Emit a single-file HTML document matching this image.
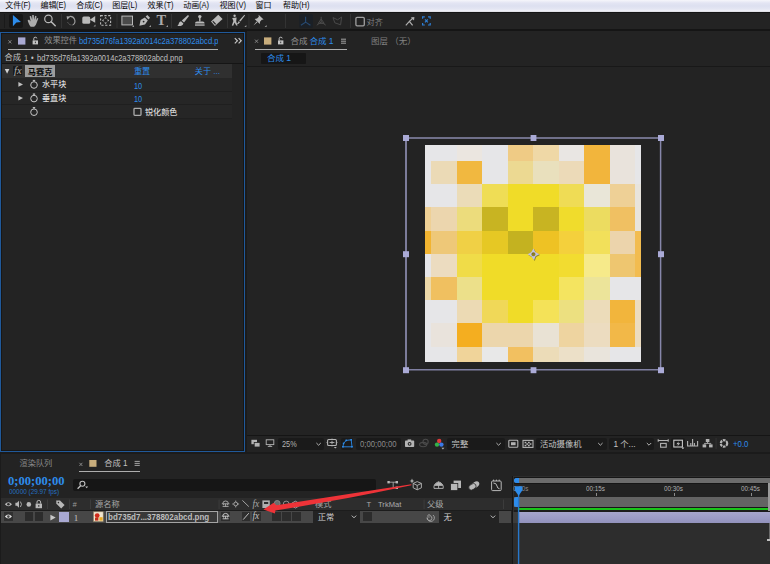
<!DOCTYPE html>
<html lang="zh-CN">
<head>
<meta charset="utf-8">
<title>After Effects</title>
<style>
html,body{margin:0;padding:0;}
body{width:770px;height:564px;overflow:hidden;background:#1b1b1b;position:relative;font-family:"Liberation Sans","Noto Sans CJK SC",sans-serif;font-size:9px;color:#b4b4b4;}
.a{position:absolute;}
.t{position:absolute;white-space:nowrap;font-size:9px;line-height:12px;color:#b8b8b8;}
.b{color:#2d8ceb;}
.l{display:inline-block;transform:scaleX(.885);transform-origin:0 50%;}
.dd{background:#1a1a1a;border-radius:2px;}
.sep{position:absolute;width:1px;background:#3a3a3a;}
svg{position:absolute;overflow:visible;}
</style>
</head>
<body>
<!-- menu bar -->
<div class="a" style="left:0;top:0;width:770px;height:11.6px;background:linear-gradient(#f6f6fb 0%,#e3e5f3 25%,#dde0f0 50%,#e4e6f3 75%,#f0f0f6 92%,#d0d0d6 100%);"></div>
<div class="t" style="left:5.2px;top:0.2px;color:#0a0a0a;font-size:8px;line-height:11px;">文件<span class="l" style="font-size:8.4px;transform:scaleX(.9)">(F)</span></div>
<div class="t" style="left:40.4px;top:0.2px;color:#0a0a0a;font-size:8px;line-height:11px;">编辑<span class="l" style="font-size:8.4px;transform:scaleX(.9)">(E)</span></div>
<div class="t" style="left:76.2px;top:0.2px;color:#0a0a0a;font-size:8px;line-height:11px;">合成<span class="l" style="font-size:8.4px;transform:scaleX(.9)">(C)</span></div>
<div class="t" style="left:112.2px;top:0.2px;color:#0a0a0a;font-size:8px;line-height:11px;">图层<span class="l" style="font-size:8.4px;transform:scaleX(.9)">(L)</span></div>
<div class="t" style="left:147.6px;top:0.2px;color:#0a0a0a;font-size:8px;line-height:11px;">效果<span class="l" style="font-size:8.4px;transform:scaleX(.9)">(T)</span></div>
<div class="t" style="left:183.2px;top:0.2px;color:#0a0a0a;font-size:8px;line-height:11px;">动画<span class="l" style="font-size:8.4px;transform:scaleX(.9)">(A)</span></div>
<div class="t" style="left:219.6px;top:0.2px;color:#0a0a0a;font-size:8px;line-height:11px;">视图<span class="l" style="font-size:8.4px;transform:scaleX(.9)">(V)</span></div>
<div class="t" style="left:255.6px;top:0.2px;color:#0a0a0a;font-size:8px;line-height:11px;">窗口<span class="l" style="font-size:8.4px;transform:scaleX(.9)"></span></div>
<div class="t" style="left:283px;top:0.2px;color:#0a0a0a;font-size:8px;line-height:11px;">帮助<span class="l" style="font-size:8.4px;transform:scaleX(.9)">(H)</span></div>

<!-- tool bar -->
<div class="a" style="left:0;top:12px;width:770px;height:20px;background:#151515;"></div>
<div class="a" id="toolbar" style="left:0;top:12.6px;width:770px;height:16.2px;background:#232323;"></div>
<!-- toolbar icons -->
<div class="a" style="left:3.8px;top:14px;width:1.2px;height:13.6px;background:#1a1a1a;"></div>
<div class="a" style="left:9px;top:13.8px;width:14.2px;height:13.8px;background:#161616;border-radius:2px;"></div>
<svg style="left:0;top:12px" width="770" height="18" viewBox="0 12 770 18">
 <!-- selection arrow -->
 <path d="M12.9 15.1 L21 22 L16.4 22.6 L12.9 26.3 Z" fill="#2d8ceb"/>
 <!-- hand -->
 <g fill="#adadad" transform="translate(33.4 20.6) scale(1.07 1.04) translate(-34.6 -20.6)">
  <path d="M29.2 20.4 l1.3 -0.9 l1.5 2 l-0.9 -5 l1.3 -0.4 l1.1 3.8 l0 -4.6 l1.4 0 l0.4 4.5 l0.9 -3.8 l1.3 0.3 l-0.6 4.2 l1.2 -2.4 l1.1 0.5 l-1.7 4.6 q-0.6 2.6 -2.2 3.2 l-3.2 0 q-1.2 -1 -2.9 -6 z"/>
 </g>
 <!-- magnifier -->
 <circle cx="48.4" cy="18.9" r="3.7" fill="none" stroke="#b9b9b9" stroke-width="1.2"/>
 <path d="M51.2 21.8 L55.2 25.8" stroke="#b9b9b9" stroke-width="1.5" stroke-linecap="round"/>
 <rect x="61" y="14" width="1" height="14" fill="#333"/>
 <!-- rotate -->
 <path d="M69.4 16.5 A4.7 4.7 0 0 1 73 24.9" fill="none" stroke="#a0a0a0" stroke-width="1.1"/><path d="M73 24.9 A4.7 4.7 0 0 1 67.4 21.4" fill="none" stroke="#6c6c6c" stroke-width="1" stroke-dasharray="1.4 1"/>
 <path d="M66.6 16.2 L70.6 16.4 L67.2 19.8 Z" fill="#a8a8a8"/>
 <!-- camera -->
 <rect x="82.3" y="16.4" width="7.9" height="7.4" rx="1.5" fill="#b9b9b9"/>
 <path d="M89.8 19.8 L95.2 16 L95.2 22.8 Z" fill="#b9b9b9"/>
 <path d="M95.5 26.6 l0 -2 l-2 2 z" fill="#9a9a9a"/>
 <!-- pan behind -->
 <g fill="none" stroke="#b9b9b9" stroke-width="1.1">
  <rect x="100.6" y="15.6" width="10" height="9.6" stroke-dasharray="2.2 1.6"/>
 </g>
 <g fill="#b9b9b9">
  <path d="M105.6 17 l1.4 1.6 l-2.8 0 z M105.6 24 l1.4 -1.6 l-2.8 0 z M102 20.4 l1.6 -1.4 l0 2.8 z M109.2 20.4 l-1.6 -1.4 l0 2.8 z"/>
 </g>
 <rect x="116.5" y="14" width="1" height="14" fill="#333"/>
 <!-- rectangle -->
 <rect x="121.9" y="16.1" width="10.6" height="8.8" fill="#4a4a4a" stroke="#b9b9b9" stroke-width="1"/>
 <path d="M134 27 l0 -2 l-2 2 z" fill="#9a9a9a"/>
 <!-- pen -->
 <g fill="#b9b9b9">
  <path d="M139.4 25.8 L140.6 20 L144.8 17.4 L147.8 20.6 L145 24.4 Z"/>
  <path d="M145.6 16.6 L147.4 15 L150 17.8 L148.5 19.6 Z"/>
 </g>
 <circle cx="143.6" cy="21.6" r="0.9" fill="#232323"/>
 <path d="M151 27 l0 -2 l-2 2 z" fill="#9a9a9a"/>
 <!-- T -->
 <text x="156.4" y="25.1" font-family="Liberation Serif,serif" font-weight="bold" font-size="14.4" fill="#ababab">T</text>
 <path d="M168 27 l0 -2 l-2 2 z" fill="#9a9a9a"/>
 <rect x="171" y="14" width="1" height="14" fill="#333"/>
 <!-- brush -->
 <path d="M188 15 L189 16 L184 22.6 L181.8 20.6 Z" fill="#b9b9b9"/>
 <path d="M181 21.2 L183.4 23.4 Q182.4 26.6 177.4 26 Q178.6 24.8 178.8 23.4 Q179.2 21.4 181 21.2 Z" fill="#b9b9b9"/>
 <!-- stamp -->
 <g fill="#b9b9b9">
  <circle cx="199.8" cy="16.6" r="1.7"/>
  <rect x="199.1" y="17.5" width="1.4" height="4"/>
  <path d="M195 23.6 q0 -2.2 2 -2.2 l5.6 0 q2 0 2 2.2 z"/>
  <rect x="195" y="24.4" width="9.6" height="1.3"/>
 </g>
 <!-- eraser -->
 <path d="M218.3 14.7 L222.6 19 L214.9 25.9 L211 21.6 Z" fill="#b9b9b9"/>
 <path d="M212.3 21.5 L213.2 20.7 L216.2 23.9 L215.1 24.8 Z" fill="#2a2a2a"/>
 <rect x="227" y="14" width="1" height="14" fill="#333"/>
 <!-- roto brush -->
 <g fill="#b9b9b9">
  <circle cx="234.6" cy="15.8" r="1.2"/>
  <path d="M232.2 18 L236.6 17.4 L236.2 21.4 L237.6 25.4 L236.2 25.6 L234.6 22.4 L233.2 25.8 L231.8 25.4 L233.4 21 Z"/>
  <path d="M244.4 14.8 L245 15.4 L240.4 21.4 L239.2 20.4 Z"/>
  <path d="M238.8 21 L240 22.2 Q238.6 24.6 236.6 24.2 Q238 23 238.8 21 Z"/>
 </g>
 <path d="M246.4 27 l0 -2 l-2 2 z" fill="#9a9a9a"/>
 <rect x="248.4" y="14" width="1" height="14" fill="#333"/>
 <!-- pin -->
 <g fill="#b9b9b9">
  <path d="M258.6 14.8 L263.6 19.4 L261.8 19.8 L260 21.8 L259.8 24 L254.6 19 L257 18.6 L258.8 16.8 Z"/>
  <path d="M256.6 21.4 L257.4 22.2 L253.4 25.6 Z"/>
 </g>
 <path d="M266.6 27 l0 -2 l-2 2 z" fill="#9a9a9a"/>
 <rect x="285" y="14" width="1" height="14" fill="#333"/>
 <!-- axis modes -->
 <rect x="299.2" y="14.2" width="13.8" height="13.8" rx="1.5" fill="#1b2026"/>
 <g fill="none" stroke="#274a72" stroke-width="1.1">
  <path d="M305.6 16.8 L305.6 22.1 L300.9 25.2 M305.6 22.1 L310.4 25.2"/>
 </g>
 <g fill="none" stroke="#4a4a4a" stroke-width="1">
  <path d="M321.2 16.8 L321.2 22 L316.8 25.2 M321.2 22 L325.8 25.2 M318.2 23.4 L324.2 23.4 L321.2 19 Z"/>
  <path d="M333 17.6 L337.6 19.8 L341.6 17 L340.6 24.8 L334.8 22.8 Z"/>
 </g>
 <rect x="350" y="14" width="1" height="14" fill="#333"/>
 <!-- snap checkbox -->
 <rect x="355.9" y="17.4" width="8.4" height="8.4" rx="1.2" fill="none" stroke="#a0a0a0" stroke-width="1.3"/>
 <text x="366.6" y="24.8" font-size="8.2" fill="#808080" font-family="Liberation Sans,Noto Sans CJK SC,sans-serif">对齐</text>
 <!-- snap icons -->
 <g stroke="#b0b0b0" stroke-width="1.2" fill="none">
  <path d="M405.8 25.4 L409.4 21.4 L412.6 25.4 M409.4 21.4 L413 18"/>
 </g>
 <path d="M410.8 17.4 L414.4 17 L414 20.6 Z" fill="#b0b0b0"/>
 <g stroke="#2d7fd6" stroke-width="1.2" fill="none" transform="translate(-0.4 0.6)">
  <path d="M423 18.2 L423 16.2 L425.2 16.2 M428.4 16.2 L430.6 16.2 L430.6 18.2 M430.6 22.4 L430.6 24.4 L428.4 24.4 M425.2 24.4 L423 24.4 L423 22.4"/>
  <path d="M425.4 18.8 L428.2 21.8 M428.2 18.8 L425.4 21.8"/>
 </g>
</svg>


<!-- left panel : effect controls -->
<div class="a" id="lp" style="left:0;top:31.5px;width:245px;height:420.3px;background:#232323;box-sizing:border-box;border:1.7px solid #20599a;box-shadow:inset 0 0 0 0.8px #141414;"></div>
<!-- effect controls tab -->
<svg style="left:0;top:31px" width="246" height="30" viewBox="0 31 246 30">
 <path d="M8.4 40.2 L11.4 43.4 M11.4 40.2 L8.4 43.4" stroke="#8c8c8c" stroke-width="0.9" fill="none"/>
 <rect x="18" y="37.4" width="7.4" height="7.2" fill="#a9a9d2"/>
 <!-- lock -->
 <rect x="32.6" y="40.4" width="5.4" height="4" fill="#c4c4c4"/>
 <path d="M33.8 40.4 L33.8 38.6 Q33.8 37.2 35.3 37.2 Q36.8 37.2 36.8 38.4" fill="none" stroke="#c4c4c4" stroke-width="1"/>
 <rect x="34.9" y="41.6" width="0.9" height="1.6" fill="#232323"/>
 <!-- chevrons -->
 <path d="M234.8 38.2 L237.4 40.8 L234.8 43.4 M238.6 38.2 L241.2 40.8 L238.6 43.4" stroke="#c8c8c8" stroke-width="1.2" fill="none"/>
</svg>
<div class="t" style="left:44.2px;top:35.2px;color:#909090;font-size:8.2px;">效果控件</div>
<div class="a" style="left:79px;top:35.4px;width:138.5px;height:12px;overflow:hidden;"><div class="t b" style="left:0;top:0;font-size:8.5px;"><span class="l" style="transform:scaleX(.9)">bd735d76fa1392a0014c2a378802abcd.png</span></div></div>
<div class="a" style="left:8px;top:48.6px;width:209.5px;height:1.3px;background:#aeaeae;"></div>
<div class="t" style="left:4.5px;top:51.6px;color:#c0c0c0;font-size:8.2px;">合成</div>
<div class="t" style="left:24.4px;top:51.8px;color:#c0c0c0;font-size:8.5px;"><span class="l">1</span></div>
<div class="t" style="left:30.8px;top:51.8px;color:#c0c0c0;font-size:8.5px;"><span class="l">•</span></div>
<div class="t" style="left:36.8px;top:51.8px;color:#c0c0c0;font-size:8.5px;"><span class="l">bd735d76fa1392a0014c2a378802abcd.png</span></div>
<div class="a" style="left:1.5px;top:63px;width:242px;height:1px;background:#151515;"></div>
<!-- rows -->
<div class="a" style="left:1.5px;top:64px;width:230.5px;height:14px;background:#303030;"></div>
<div class="a" style="left:1.5px;top:78px;width:230.5px;height:40px;background:#262626;"></div>
<div class="a" style="left:1.5px;top:91px;width:230.5px;height:1px;background:#1f1f1f;"></div>
<div class="a" style="left:1.5px;top:104.3px;width:230.5px;height:1px;background:#1f1f1f;"></div>
<div class="a" style="left:1.5px;top:117.6px;width:230.5px;height:1px;background:#1f1f1f;"></div>
<div class="a" style="left:25px;top:64.5px;width:30px;height:12.5px;background:#9c9c9c;"></div>
<div class="t" style="left:27.8px;top:66.5px;color:#080808;font-size:8.2px;font-weight:bold;">马赛克</div>
<div class="t b" style="left:134px;top:66.2px;font-size:8.1px;">重置</div>
<div class="t b" style="left:194.8px;top:66.2px;font-size:8.1px;">关于 ...</div>
<div class="a" style="left:12.8px;top:65.8px;width:9.6px;height:9.2px;background:#1b1b1b;"></div>
<div class="t" style="left:14px;top:65.4px;color:#b0b0b0;font-family:'Liberation Serif',serif;font-style:italic;font-size:10.4px;">fx</div>
<div class="t" style="left:42px;top:79.4px;color:#dadada;font-size:8.1px;font-weight:500;">水平块</div>
<div class="t" style="left:42px;top:92.9px;color:#dadada;font-size:8.1px;font-weight:500;">垂直块</div>
<div class="t b" style="left:134px;top:79.5px;font-size:8.3px;"><span class="l">10</span></div>
<div class="t b" style="left:134px;top:93.1px;font-size:8.3px;"><span class="l">10</span></div>
<div class="t" style="left:145px;top:107.2px;color:#d4d4d4;font-size:8.1px;font-weight:500;">锐化颜色</div>
<svg style="left:0;top:60px" width="246" height="60" viewBox="0 60 246 60">
 <path d="M4.8 69 L9.4 69 L7.1 73.8 Z" fill="#d0d0d0"/>
 <path d="M18.4 82 L23 84.4 L18.4 86.8 Z" fill="#c0c0c0"/>
 <path d="M18.4 95.7 L23 98.1 L18.4 100.5 Z" fill="#c0c0c0"/>
 <g fill="none" stroke="#c6c6c6" stroke-width="1">
  <circle cx="34" cy="85" r="3.3"/><path d="M34 81.7 L34 80.4 M32.8 80.4 L35.2 80.4"/>
  <circle cx="34" cy="98.6" r="3.3"/><path d="M34 95.3 L34 94 M32.8 94 L35.2 94"/>
  <circle cx="34" cy="112.2" r="3.3"/><path d="M34 108.9 L34 107.6 M32.8 107.6 L35.2 107.6"/>
  <rect x="134" y="108.4" width="7" height="7" rx="0.8" stroke="#ababab" stroke-width="1.3"/>
 </g>
</svg>


<!-- right panel : composition viewer -->
<div class="a" id="rp" style="left:247px;top:31px;width:523px;height:421px;background:#232323;"></div>
<!-- comp viewer tab -->
<svg style="left:247px;top:31px" width="523" height="36" viewBox="247 31 523 36">
 <path d="M255 39.6 L258 42.8 M258 39.6 L255 42.8" stroke="#8c8c8c" stroke-width="0.9" fill="none"/>
 <rect x="264" y="37.4" width="7.4" height="7.2" fill="#c8ad7c"/>
 <rect x="278" y="40.4" width="5.4" height="4" fill="#c4c4c4"/>
 <path d="M279.2 40.4 L279.2 38.6 Q279.2 37.2 280.7 37.2 Q282.2 37.2 282.2 38.4" fill="none" stroke="#c4c4c4" stroke-width="1"/>
 <rect x="280.3" y="41.6" width="0.9" height="1.6" fill="#232323"/>
 <path d="M341 39.2 L346 39.2 M341 41.2 L346 41.2 M341 43.2 L346 43.2" stroke="#b0b0b0" stroke-width="0.9"/>
</svg>
<div class="t" style="left:290.5px;top:35.4px;color:#909090;font-size:8.5px;">合成</div>
<div class="t b" style="left:309.5px;top:35.4px;font-size:8.5px;">合成 1</div>
<div class="a" style="left:254.6px;top:48.6px;width:92px;height:1.3px;background:#aeaeae;"></div>
<div class="t" style="left:371px;top:35.4px;color:#808080;font-size:8.5px;">图层 （无）</div>
<div class="a" style="left:261px;top:53px;width:44.5px;height:10.5px;background:#161616;border-radius:1px;"></div>
<div class="t b" style="left:267px;top:52.4px;font-size:8.5px;">合成 1</div>
<div class="a" style="left:247px;top:66px;width:523px;height:1px;background:#181818;"></div>

<svg style="position:absolute;left:425.0px;top:145.0px" width="216.20000000000005" height="217.10000000000002" viewBox="0 0 216.20000000000005 217.10000000000002" shape-rendering="crispEdges"><rect x="0.00" y="0.00" width="6.33" height="16.30" fill="#e6e6e8"/><rect x="6.03" y="0.00" width="25.83" height="16.30" fill="#e6e6e8"/><rect x="31.56" y="0.00" width="25.83" height="16.30" fill="#ebe6e0"/><rect x="57.09" y="0.00" width="25.83" height="16.30" fill="#e6e6e8"/><rect x="82.62" y="0.00" width="25.83" height="16.30" fill="#efcb85"/><rect x="108.15" y="0.00" width="25.83" height="16.30" fill="#efd8a6"/><rect x="133.68" y="0.00" width="25.83" height="16.30" fill="#e9e6e3"/><rect x="159.21" y="0.00" width="25.83" height="16.30" fill="#f2b53c"/><rect x="184.74" y="0.00" width="25.83" height="16.30" fill="#e9e3dc"/><rect x="210.27" y="0.00" width="6.23" height="16.30" fill="#e6e6e8"/><rect x="0.00" y="16.00" width="6.33" height="23.50" fill="#e6e6e8"/><rect x="6.03" y="16.00" width="25.83" height="23.50" fill="#ebdab6"/><rect x="31.56" y="16.00" width="25.83" height="23.50" fill="#f1b840"/><rect x="57.09" y="16.00" width="25.83" height="23.50" fill="#e6e6e8"/><rect x="82.62" y="16.00" width="25.83" height="23.50" fill="#ecd992"/><rect x="108.15" y="16.00" width="25.83" height="23.50" fill="#e9e0bd"/><rect x="133.68" y="16.00" width="25.83" height="23.50" fill="#ecdab8"/><rect x="159.21" y="16.00" width="25.83" height="23.50" fill="#f2b53c"/><rect x="184.74" y="16.00" width="25.83" height="23.50" fill="#e9e3dc"/><rect x="210.27" y="16.00" width="6.23" height="23.50" fill="#e6e6e8"/><rect x="0.00" y="39.20" width="6.33" height="23.50" fill="#e6e6e8"/><rect x="6.03" y="39.20" width="25.83" height="23.50" fill="#e6e6e8"/><rect x="31.56" y="39.20" width="25.83" height="23.50" fill="#ebdcb8"/><rect x="57.09" y="39.20" width="25.83" height="23.50" fill="#efdd55"/><rect x="82.62" y="39.20" width="25.83" height="23.50" fill="#f0dc28"/><rect x="108.15" y="39.20" width="25.83" height="23.50" fill="#f0dc28"/><rect x="133.68" y="39.20" width="25.83" height="23.50" fill="#efdc55"/><rect x="159.21" y="39.20" width="25.83" height="23.50" fill="#e9e6d8"/><rect x="184.74" y="39.20" width="25.83" height="23.50" fill="#eed096"/><rect x="210.27" y="39.20" width="6.23" height="23.50" fill="#e8e4dc"/><rect x="0.00" y="62.40" width="6.33" height="23.50" fill="#efd095"/><rect x="6.03" y="62.40" width="25.83" height="23.50" fill="#ecd6ae"/><rect x="31.56" y="62.40" width="25.83" height="23.50" fill="#ecdc7c"/><rect x="57.09" y="62.40" width="25.83" height="23.50" fill="#c8b422"/><rect x="82.62" y="62.40" width="25.83" height="23.50" fill="#f0dc28"/><rect x="108.15" y="62.40" width="25.83" height="23.50" fill="#c8b422"/><rect x="133.68" y="62.40" width="25.83" height="23.50" fill="#f0dc2c"/><rect x="159.21" y="62.40" width="25.83" height="23.50" fill="#ecdc60"/><rect x="184.74" y="62.40" width="25.83" height="23.50" fill="#f0c062"/><rect x="210.27" y="62.40" width="6.23" height="23.50" fill="#e8e4dc"/><rect x="0.00" y="85.60" width="6.33" height="23.50" fill="#f2b430"/><rect x="6.03" y="85.60" width="25.83" height="23.50" fill="#eec878"/><rect x="31.56" y="85.60" width="25.83" height="23.50" fill="#f0d045"/><rect x="57.09" y="85.60" width="25.83" height="23.50" fill="#e6c824"/><rect x="82.62" y="85.60" width="25.83" height="23.50" fill="#c4b220"/><rect x="108.15" y="85.60" width="25.83" height="23.50" fill="#eec224"/><rect x="133.68" y="85.60" width="25.83" height="23.50" fill="#f4d03c"/><rect x="159.21" y="85.60" width="25.83" height="23.50" fill="#f2e05a"/><rect x="184.74" y="85.60" width="25.83" height="23.50" fill="#ecd4ac"/><rect x="210.27" y="85.60" width="6.23" height="23.50" fill="#f2bc50"/><rect x="0.00" y="108.80" width="6.33" height="23.50" fill="#e6e6e8"/><rect x="6.03" y="108.80" width="25.83" height="23.50" fill="#ecdcc0"/><rect x="31.56" y="108.80" width="25.83" height="23.50" fill="#f0dc48"/><rect x="57.09" y="108.80" width="25.83" height="23.50" fill="#f0dc28"/><rect x="82.62" y="108.80" width="25.83" height="23.50" fill="#f0dc28"/><rect x="108.15" y="108.80" width="25.83" height="23.50" fill="#f0dc28"/><rect x="133.68" y="108.80" width="25.83" height="23.50" fill="#f2dc30"/><rect x="159.21" y="108.80" width="25.83" height="23.50" fill="#f6ea8a"/><rect x="184.74" y="108.80" width="25.83" height="23.50" fill="#eec670"/><rect x="210.27" y="108.80" width="6.23" height="23.50" fill="#f2bc50"/><rect x="0.00" y="132.00" width="6.33" height="23.50" fill="#ecd8a8"/><rect x="6.03" y="132.00" width="25.83" height="23.50" fill="#f0c060"/><rect x="31.56" y="132.00" width="25.83" height="23.50" fill="#ece08a"/><rect x="57.09" y="132.00" width="25.83" height="23.50" fill="#f0dc28"/><rect x="82.62" y="132.00" width="25.83" height="23.50" fill="#f0dc28"/><rect x="108.15" y="132.00" width="25.83" height="23.50" fill="#f0dc28"/><rect x="133.68" y="132.00" width="25.83" height="23.50" fill="#f4e460"/><rect x="159.21" y="132.00" width="25.83" height="23.50" fill="#ece49a"/><rect x="184.74" y="132.00" width="25.83" height="23.50" fill="#e6e6e8"/><rect x="210.27" y="132.00" width="6.23" height="23.50" fill="#e6e6e8"/><rect x="0.00" y="155.20" width="6.33" height="23.50" fill="#e6e6e8"/><rect x="6.03" y="155.20" width="25.83" height="23.50" fill="#e6e6e8"/><rect x="31.56" y="155.20" width="25.83" height="23.50" fill="#ecdab4"/><rect x="57.09" y="155.20" width="25.83" height="23.50" fill="#f0d858"/><rect x="82.62" y="155.20" width="25.83" height="23.50" fill="#f0dc28"/><rect x="108.15" y="155.20" width="25.83" height="23.50" fill="#f4e258"/><rect x="133.68" y="155.20" width="25.83" height="23.50" fill="#ece080"/><rect x="159.21" y="155.20" width="25.83" height="23.50" fill="#ecdcba"/><rect x="184.74" y="155.20" width="25.83" height="23.50" fill="#f2b53c"/><rect x="210.27" y="155.20" width="6.23" height="23.50" fill="#ecdcc0"/><rect x="0.00" y="178.40" width="6.33" height="23.50" fill="#e6e6e8"/><rect x="6.03" y="178.40" width="25.83" height="23.50" fill="#e9e3dc"/><rect x="31.56" y="178.40" width="25.83" height="23.50" fill="#f4ae20"/><rect x="57.09" y="178.40" width="25.83" height="23.50" fill="#ecd6ac"/><rect x="82.62" y="178.40" width="25.83" height="23.50" fill="#ecd6ac"/><rect x="108.15" y="178.40" width="25.83" height="23.50" fill="#e9e2d4"/><rect x="133.68" y="178.40" width="25.83" height="23.50" fill="#eed4a0"/><rect x="159.21" y="178.40" width="25.83" height="23.50" fill="#ecdcc0"/><rect x="184.74" y="178.40" width="25.83" height="23.50" fill="#f2b848"/><rect x="210.27" y="178.40" width="6.23" height="23.50" fill="#ecdcc0"/><rect x="0.00" y="201.60" width="6.33" height="15.80" fill="#e6e6e8"/><rect x="6.03" y="201.60" width="25.83" height="15.80" fill="#e6e6e8"/><rect x="31.56" y="201.60" width="25.83" height="15.80" fill="#f0d49a"/><rect x="57.09" y="201.60" width="25.83" height="15.80" fill="#e8e8e8"/><rect x="82.62" y="201.60" width="25.83" height="15.80" fill="#f2c060"/><rect x="108.15" y="201.60" width="25.83" height="15.80" fill="#ecdcb8"/><rect x="133.68" y="201.60" width="25.83" height="15.80" fill="#ece0c8"/><rect x="159.21" y="201.60" width="25.83" height="15.80" fill="#e9e4dc"/><rect x="184.74" y="201.60" width="25.83" height="15.80" fill="#e6e6e8"/><rect x="210.27" y="201.60" width="6.23" height="15.80" fill="#e6e6e8"/></svg>
<!-- layer bounding box -->
<svg style="left:0;top:0" width="770" height="564" viewBox="0 0 770 564">
 <g fill="none">
  <path d="M406 138 L661 138" stroke="#70708a" stroke-width="2"/>
  <path d="M406 138 L406 370" stroke="#7c7c9a" stroke-width="2"/>
  <path d="M660.6 138 L660.6 370" stroke="#8686aa" stroke-width="1.5"/>
  <path d="M406 369.8 L661 369.8" stroke="#8080a2" stroke-width="1.6"/>
 </g>
 <g fill="#aaaad6">
  <rect x="403" y="135" width="6" height="6"/><rect x="530.6" y="135" width="5.8" height="6"/><rect x="658" y="135" width="6" height="6"/>
  <rect x="403" y="251.2" width="6" height="6"/><rect x="658" y="251.2" width="6" height="6"/>
  <rect x="403" y="367.2" width="6" height="6"/><rect x="530.6" y="367.2" width="5.8" height="6"/><rect x="658" y="367.2" width="6" height="6"/>
 </g>
 <!-- anchor point -->
 <g transform="translate(533.4 254.3)">
  <path d="M0 -5.8 L1.9 -2.2 L5.9 0 L2.1 2 L0.6 6 L-1.9 2.2 L-5.8 0 L-2.1 -2 Z" fill="#3c3820" opacity="0.55" transform="translate(0.7 0.7)"/>
  <path d="M0 -5.8 L1.9 -2.2 L5.9 0 L2.1 2 L0.6 6 L-1.9 2.2 L-5.8 0 L-2.1 -2 Z M0 -2 A2 2 0 1 0 0.01 -2 Z" fill="#c2c2e0" fill-rule="evenodd"/>
 </g>
</svg>

<!-- viewer bottom bar -->
<div class="a" style="left:247px;top:434.6px;width:523px;height:1.4px;background:#151515;"></div>
<div class="a dd" style="left:278.4px;top:437.5px;width:46px;height:12px;"></div>
<div class="a dd" style="left:340.8px;top:437.5px;width:12.6px;height:12px;"></div>
<div class="a dd" style="left:355.6px;top:437.5px;width:45.6px;height:12px;"></div>
<div class="a dd" style="left:447.3px;top:437.5px;width:58px;height:12px;"></div>
<div class="a dd" style="left:535.6px;top:437.5px;width:71px;height:12px;"></div>
<div class="a dd" style="left:608.6px;top:437.5px;width:45.8px;height:12px;"></div>
<div class="a dd" style="left:670.6px;top:437.5px;width:14.6px;height:12px;"></div>
<div class="t" style="left:282px;top:437.6px;font-size:8.3px;color:#b4b4b4;"><span class="l">25%</span></div>
<div class="t" style="left:360px;top:437.6px;font-size:8.3px;color:#8c8c8c;"><span class="l" style="transform:scaleX(.93)">0;00;00;00</span></div>
<div class="t" style="left:451.6px;top:438px;font-size:8.3px;color:#c4c4c4;">完整</div>
<div class="t" style="left:540px;top:438px;font-size:8.3px;color:#c4c4c4;">活动摄像机</div>
<div class="t" style="left:613.4px;top:438px;font-size:8.3px;color:#c4c4c4;">1 个...</div>
<div class="t b" style="left:733px;top:437.6px;font-size:8.3px;"><span class="l" style="transform:scaleX(.94)">+0.0</span></div>
<svg style="left:247px;top:436px" width="523" height="16" viewBox="247 436 523 16">
 <g fill="none" stroke="#b4b4b4" stroke-width="1">
  <!-- chevrons -->
  <path d="M316.4 443 L318.6 445.2 L320.8 443"/>
  <path d="M496.4 443 L498.6 445.2 L500.8 443"/>
  <path d="M598.2 443 L600.4 445.2 L602.6 443"/>
  <path d="M646.8 443 L649 445.2 L651.2 443"/>
 </g>
 <!-- icon 1: always preview -->
 <rect x="251.4" y="439.8" width="5.6" height="4.4" fill="#b4b4b4"/>
 <rect x="254.2" y="442.4" width="5.8" height="4.6" fill="#b4b4b4" stroke="#232323" stroke-width="0.8"/>
 <!-- icon 2: monitor -->
 <rect x="266.2" y="439.8" width="7.6" height="4.8" fill="none" stroke="#b4b4b4" stroke-width="0.9"/>
 <path d="M270 444.8 L270 446.2 M267.8 446.4 L272.2 446.4" stroke="#b4b4b4" stroke-width="0.9"/>
 <!-- grid/guides -->
 <rect x="327.6" y="439.5" width="8.8" height="6" rx="1" fill="none" stroke="#b4b4b4" stroke-width="1.1"/>
 <path d="M332 440.8 L332 444.2 M329.6 442.5 L334.4 442.5 M332 438.6 L332 439.6 M332 445.4 L332 446.4 M326.6 442.5 L327.6 442.5 M336.4 442.5 L337.4 442.5" stroke="#b4b4b4" stroke-width="0.9"/>
 <path d="M333.8 447 l3 0 l-1.5 1.6 z" fill="#b4b4b4"/>
 <!-- mask toggle blue -->
 <path d="M346.2 440.4 L351.2 439.8 L352 446.8 L342.9 446.8 L343.6 443.4 Z" fill="none" stroke="#2d8ceb" stroke-width="0.9"/>
 <g fill="#2d8ceb"><rect x="345.4" y="439.6" width="1.6" height="1.6"/><rect x="350.4" y="439" width="1.6" height="1.6"/><rect x="351.2" y="446" width="1.6" height="1.6"/><rect x="342.1" y="446" width="1.6" height="1.6"/><rect x="342.8" y="442.6" width="1.6" height="1.6"/></g>
 <!-- camera -->
 <rect x="405" y="440.6" width="9.2" height="6.4" rx="0.8" fill="#b4b4b4"/>
 <rect x="407.6" y="439.4" width="3.6" height="1.6" fill="#b4b4b4"/>
 <circle cx="409.6" cy="443.8" r="1.9" fill="#232323"/><circle cx="409.6" cy="443.8" r="0.9" fill="#b4b4b4"/>
 <!-- dim show snapshot -->
 <g fill="none" stroke="#4a4a4a" stroke-width="1.1"><circle cx="425.6" cy="441.8" r="2.6"/><ellipse cx="423.2" cy="444.6" rx="3.6" ry="2.2"/></g>
 <!-- RGB -->
 <circle cx="439.2" cy="441" r="2.2" fill="#e03a3a"/><circle cx="437" cy="444.6" r="2.2" fill="#35b04a"/><circle cx="441.4" cy="444.6" r="2.2" fill="#3a78e6"/>
 <path d="M441.4 447.8 l3 0 l-1.5 1.6 z" fill="#b4b4b4"/>
 <!-- region of interest -->
 <rect x="508.8" y="440.2" width="9" height="7" rx="0.8" fill="none" stroke="#b4b4b4" stroke-width="1.1"/>
 <rect x="511" y="442.2" width="4.6" height="3" fill="#b4b4b4"/>
 <!-- transparency grid -->
 <rect x="523" y="440.4" width="10" height="7" fill="none" stroke="#b4b4b4" stroke-width="1.1"/>
 <g fill="#b4b4b4" transform="translate(0 0.8)"><rect x="524.6" y="441" width="1.7" height="1.5"/><rect x="528" y="441" width="1.7" height="1.5"/><rect x="526.3" y="442.5" width="1.7" height="1.5"/><rect x="529.7" y="442.5" width="1.7" height="1.5"/><rect x="524.6" y="444" width="1.7" height="1.5"/><rect x="528" y="444" width="1.7" height="1.5"/></g>
 <!-- pixel aspect -->
 <path d="M658 440.5 L668.4 440.5 M658.2 439.3 L658.2 441.7 M668.2 439.3 L668.2 441.7" stroke="#b4b4b4" stroke-width="1.1" fill="none"/>
 <rect x="660.6" y="443.4" width="5.6" height="3.8" fill="none" stroke="#b4b4b4" stroke-width="1.1"/>
 <!-- fast preview -->
 <rect x="673.8" y="440.2" width="8.6" height="6.8" fill="none" stroke="#c8c8c8" stroke-width="1.1"/>
 <path d="M678.8 441.2 L676.4 444.2 L678.4 444.2 L677.2 446.6 L680.2 443.2 L678.2 443.2 Z" fill="#c8c8c8"/>
 <path d="M681.4 447.6 l3 0 l-1.5 1.6 z" fill="#c8c8c8"/>
 <!-- timeline -->
 <path d="M687.6 441 L687.6 446 L697.6 446 L697.6 441 M690.8 443 L690.8 446 M694.4 443 L694.4 446 M692.6 439 L692.6 446" stroke="#b4b4b4" stroke-width="1.1" fill="none"/>
 <!-- flowchart -->
 <g fill="#b4b4b4"><rect x="705.8" y="439" width="3.6" height="3"/><rect x="702.6" y="444.4" width="3.6" height="3"/><rect x="709" y="444.4" width="3.6" height="3"/></g>
 <path d="M707.6 442 L707.6 443.4 M704.4 444.4 L704.4 443.4 L710.8 443.4 L710.8 444.4" stroke="#b4b4b4" stroke-width="0.9" fill="none"/>
 <rect x="715.6" y="438" width="1" height="11" fill="#333"/>
 <!-- exposure -->
 <circle cx="724" cy="443.4" r="3.2" fill="none" stroke="#b4b4b4" stroke-width="2.2" stroke-dasharray="2.6 0.8"/>
</svg>


<!-- timeline panel -->
<div class="a" id="tl" style="left:1px;top:453.6px;width:769px;height:110.4px;background:#232323;"></div>
<!-- timeline tabs -->
<div class="t" style="left:19.5px;top:458.2px;font-size:8.2px;color:#8a8a8a;">渲染队列</div>
<div class="t" style="left:104.3px;top:458.2px;font-size:8.2px;color:#c0c0c0;">合成 1</div>
<div class="a" style="left:79px;top:470.6px;width:61px;height:1.3px;background:#aeaeae;"></div>
<div class="t b" style="left:8px;top:474px;font-family:'Liberation Serif',serif;font-weight:bold;font-size:12.6px;line-height:15px;">0;00;00;00</div>
<div class="t" style="left:9.4px;top:485.6px;font-size:6.8px;color:#2470c0;"><span class="l" style="transform:scaleX(.94)">00000 (29.97 fps)</span></div>
<div class="a" style="left:72.5px;top:478.8px;width:303.7px;height:12.4px;background:#161616;border-radius:2px;"></div>
<!-- column header -->
<div class="a" style="left:1px;top:498.4px;width:512px;height:11.4px;background:#2d2d2d;"></div>
<!-- layer row -->
<div class="a" style="left:1px;top:510.4px;width:510px;height:12.6px;background:#474747;"></div>
<div class="a" style="left:1px;top:509.8px;width:512px;height:0.8px;background:#1c1c1c;"></div>
<div class="a" style="left:4px;top:512px;width:9px;height:9.2px;background:#303030;"></div>
<div class="a" style="left:24.5px;top:512px;width:8.5px;height:8.6px;background:#2c2c2c;"></div>
<div class="a" style="left:34.5px;top:512px;width:8.5px;height:8.6px;background:#2c2c2c;"></div>
<div class="a" style="left:59px;top:512.4px;width:10px;height:9.6px;background:#a9a9d2;"></div>
<div class="t" style="left:73.8px;top:512px;font-size:9px;color:#c4c4c4;font-family:'Liberation Serif',serif;">1</div>
<div class="t" style="left:72.6px;top:498.8px;font-size:7.4px;color:#9a9a9a;font-style:italic;">#</div>
<div class="t" style="left:95px;top:499px;font-size:8.2px;color:#a8a8a8;">源名称</div>
<div class="a" style="left:105.6px;top:511.2px;width:112.4px;height:11.6px;box-sizing:border-box;border:1px solid #a4a4a4;background:#383838;"></div>
<div class="t" style="left:107.6px;top:511px;font-size:8.5px;font-weight:bold;color:#bcbcbc;"><span class="l" style="transform:scaleX(.94)">bd735d7...378802abcd.png</span></div>
<!-- switch squares -->
<div class="a" style="left:221px;top:512px;width:9.2px;height:8.6px;background:#2e2e2e;"></div>
<div class="a" style="left:241.8px;top:512px;width:8.2px;height:8.6px;background:#2e2e2e;"></div>
<div class="a" style="left:251.8px;top:512px;width:8.8px;height:8.6px;background:#2e2e2e;"></div>
<div class="a" style="left:272px;top:512px;width:8.6px;height:8.6px;background:#2c2c2c;"></div>
<div class="a" style="left:282px;top:512px;width:8.6px;height:8.6px;background:#2c2c2c;"></div>
<div class="a" style="left:292px;top:512px;width:8.6px;height:8.6px;background:#2c2c2c;"></div>
<div class="t" style="left:252.4px;top:497.8px;font-family:'Liberation Serif',serif;font-style:italic;font-size:9.6px;color:#a4a4a4;">fx</div>
<div class="t" style="left:252.4px;top:510.2px;font-family:'Liberation Serif',serif;font-style:italic;font-size:9.6px;color:#c0c0c0;">fx</div>
<div class="t" style="left:315px;top:499px;font-size:8.2px;color:#a8a8a8;">模式</div>
<div class="t" style="left:366.4px;top:499.4px;font-size:7.6px;color:#acacac;">T</div>
<div class="t" style="left:378px;top:499.4px;font-size:7.6px;color:#acacac;">TrkMat</div>
<div class="t" style="left:427px;top:499px;font-size:8.2px;color:#a8a8a8;">父级</div>
<div class="a" style="left:312.6px;top:510.8px;width:47.4px;height:12px;background:#232323;"></div>
<div class="t" style="left:317.8px;top:511.6px;font-size:8.2px;color:#d0d0d0;">正常</div>
<div class="a" style="left:363.4px;top:512px;width:8.6px;height:8.6px;background:#2c2c2c;"></div>
<div class="a" style="left:438.8px;top:510.8px;width:60px;height:12px;background:#232323;"></div>
<div class="t" style="left:443.5px;top:511.6px;font-size:8.2px;color:#d0d0d0;">无</div>
<!-- time area -->
<div class="a" style="left:513px;top:476px;width:257px;height:88px;background:#2d2d2d;"></div>
<div class="a" style="left:512px;top:476px;width:1.4px;height:88px;background:#161616;"></div>
<div class="a" style="left:514px;top:476.6px;width:256px;height:7px;background:#161616;"></div>
<div class="a" style="left:514px;top:477.6px;width:256px;height:5.2px;background:#6c6c6c;border-radius:2.5px 0 0 2.5px;"></div>
<div class="a" style="left:514px;top:477.6px;width:4.6px;height:5.2px;background:#2d8ceb;border-radius:2.5px 0 0 2.5px;"></div>
<div class="a" style="left:514px;top:483.6px;width:254px;height:13.6px;background:#222;"></div>
<div class="a" style="left:514px;top:497.4px;width:254px;height:10px;background:#636363;"></div>
<div class="a" style="left:514px;top:497.4px;width:4.4px;height:10px;background:#2d8ceb;border-radius:2.5px 0 0 2.5px;"></div>
<div class="a" style="left:519px;top:507.4px;width:249px;height:3px;background:#161616;"></div>
<div class="a" style="left:519px;top:507.8px;width:249px;height:2px;background:#1ac41a;"></div>
<div class="a" style="left:514px;top:510.4px;width:256px;height:1.4px;background:#1c1c1c;"></div>
<div class="a" style="left:519px;top:511.8px;width:251px;height:11px;background:linear-gradient(#a6a6cc,#9c9cc6 50%,#9292bc);"></div>
<div class="a" style="left:513.4px;top:511.8px;width:5.6px;height:11px;background:#3c3c3c;"></div>
<div class="a" style="left:768px;top:483px;width:1.6px;height:28px;background:#9a9a9a;"></div>
<div class="a" style="left:767px;top:539px;width:3px;height:1.6px;background:#c0c0c0;"></div>
<div class="a" style="left:769px;top:523px;width:1px;height:16px;background:#6a6a6a;"></div>
<div class="t" style="left:513px;top:482.6px;font-size:7.6px;color:#8c8c8c;"><span class="l" style="transform:scaleX(.83)">0:00s</span></div>
<div class="t" style="left:585.8px;top:482.6px;font-size:7.6px;color:#b0b0b0;"><span class="l" style="transform:scaleX(.83)">00:15s</span></div>
<div class="t" style="left:663.6px;top:482.6px;font-size:7.6px;color:#b0b0b0;"><span class="l" style="transform:scaleX(.83)">00:30s</span></div>
<div class="t" style="left:741px;top:482.6px;font-size:7.6px;color:#b0b0b0;"><span class="l" style="transform:scaleX(.83)">00:45s</span></div>
<div class="a" style="left:596px;top:493.4px;width:1px;height:2.4px;background:#8c8c8c;"></div>
<div class="a" style="left:673.8px;top:493.4px;width:1px;height:2.4px;background:#8c8c8c;"></div>
<div class="a" style="left:751.4px;top:493.4px;width:1px;height:2.4px;background:#8c8c8c;"></div>
<svg style="left:0;top:455px" width="770" height="109" viewBox="0 455 770 109">
 <!-- tab icons -->
 <path d="M79.4 462.8 L82.4 466 M82.4 462.8 L79.4 466" stroke="#8c8c8c" stroke-width="0.9" fill="none"/>
 <rect x="89.3" y="460" width="7.2" height="6.8" fill="#c8ad7c"/>
 <path d="M134.6 461.4 L139.8 461.4 M134.6 463.4 L139.8 463.4 M134.6 465.4 L139.8 465.4" stroke="#b0b0b0" stroke-width="0.9"/>
 <!-- search icon -->
 <circle cx="82.4" cy="483.8" r="2.5" fill="none" stroke="#c0c0c0" stroke-width="1.1"/>
 <path d="M80.6 485.8 L77.6 488.8" stroke="#c0c0c0" stroke-width="1.3"/>
 <path d="M85.2 486.6 l3 0 l-1.5 1.6 z" fill="#c0c0c0"/>
 <!-- header icons -->
 <g fill="#b8b8b8">
  <path d="M4.8 504.2 Q8.4 500.2 12 504.2 Q8.4 508.2 4.8 504.2 Z"/>
  <path d="M15.4 502.8 L17 502.8 L19 500.8 L19 507.8 L17 505.8 L15.4 505.8 Z"/>
  <circle cx="28.8" cy="504.4" r="2.3"/>
  <rect x="35.6" y="503.6" width="6.4" height="4.6"/>
  <path d="M56.2 500.6 L60 500.4 L64.6 505 L61.2 508.4 L56.4 503.8 Z"/>
 </g>
 <circle cx="8.4" cy="504.2" r="1.3" fill="#2d2d2d"/>
 <path d="M20.4 501.6 Q22.6 504.3 20.4 507" fill="none" stroke="#b8b8b8" stroke-width="0.9"/>
 <path d="M37 503.6 L37 502 Q37 500.4 38.8 500.4 Q40.6 500.4 40.6 502 L40.6 503.6" fill="none" stroke="#b8b8b8" stroke-width="1"/>
 <rect x="38.3" y="505" width="1" height="1.8" fill="#2d2d2d"/>
 <circle cx="58.4" cy="502.6" r="0.8" fill="#2d2d2d"/>
 <g fill="#3c3c3c"><rect x="47" y="499.6" width="1" height="9.4"/><rect x="69" y="499.6" width="1" height="9.4"/><rect x="90" y="499.6" width="1" height="9.4"/><rect x="218.6" y="499.6" width="1" height="9.4"/><rect x="423.6" y="499.6" width="1" height="9.4"/><rect x="503" y="499.6" width="1" height="9.4"/></g>
 <!-- layer row icons -->
 <path d="M4.8 516.6 Q8.4 512.6 12 516.6 Q8.4 520.6 4.8 516.6 Z" fill="#d8d8d8"/>
 <circle cx="8.4" cy="516.6" r="1.3" fill="#474747"/>
 <path d="M50.4 514.7 L55.7 517.6 L50.4 520.5 Z" fill="#c8c8c8"/>
 <!-- file icon -->
 <rect x="93.4" y="511.8" width="9.8" height="9.8" fill="#f0e6d0" stroke="#8a7a5a" stroke-width="0.6"/>
 <circle cx="97.2" cy="515.6" r="2.4" fill="#d02a1a"/>
 <rect x="95" y="517.6" width="3.4" height="3" fill="#c0301a"/>
 <rect x="99.4" y="517.2" width="3.2" height="3.4" fill="#e8a820"/>
 <!-- switches header -->
 <g fill="none" stroke="#b0b0b0" stroke-width="0.9">
  <path d="M222.8 503.6 A2.8 2.6 0 0 1 228.4 503.6 M221.8 503.8 L229.4 503.8 M225.6 503.8 L225.6 506.4 M222.6 506.4 L228.6 506.4 M223.6 503.8 L223.6 505.2 M227.6 503.8 L227.6 505.2"/>
  <circle cx="235.7" cy="504" r="1.9"/><path d="M235.7 500.6 L235.7 501.8 M235.7 506.2 L235.7 507.4 M232.3 504 L233.5 504 M237.9 504 L239.1 504"/>
  <path d="M242.4 500.4 L248.8 506.6"/>
  <circle cx="277.2" cy="503.4" r="2.9" fill="#6c6c6c" stroke="#8a8a8a"/>
  <circle cx="286.2" cy="504" r="2.9" stroke="#9a9a9a"/>
  <path d="M295.4 501.2 L298.6 503 L295.4 504.8 L292.2 503 Z M292.2 503 L292.2 506.2 L295.4 508 L298.6 506.2 L298.6 503"/>
 </g>
 <rect x="262.4" y="500.4" width="7.4" height="7.6" fill="#b0b0b0"/>
 <rect x="264" y="502" width="4.2" height="2" fill="#2d2d2d"/>
 <!-- layer switches -->
 <g fill="none" stroke="#d0d0d0" stroke-width="0.9">
  <path d="M222.8 516 A2.8 2.6 0 0 1 228.4 516 M221.8 516.2 L229.4 516.2 M225.6 516.2 L225.6 518.8 M222.6 518.8 L228.6 518.8 M223.6 516.2 L223.6 517.6 M227.6 516.2 L227.6 517.6"/>
  <path d="M243.2 519.6 L248.8 513.2"/>
 </g>
 <!-- dropdown chevrons -->
 <g fill="none" stroke="#c0c0c0" stroke-width="1">
  <path d="M351.8 515.6 L354 517.8 L356.2 515.6"/>
  <path d="M490.8 515.6 L493 517.8 L495.2 515.6"/>
 </g>
 <!-- pick whip spiral -->
 <path transform="translate(-1.4 0)" d="M431 517 A1.2 1.2 0 1 1 431.6 515.8 A2.4 2.4 0 1 1 428.6 517.6 A3.6 3.6 0 1 0 434.4 515" fill="none" stroke="#a8a8a8" stroke-width="0.9"/>
 <!-- top-right icons -->
 <g fill="none" stroke="#b8b8b8" stroke-width="1">
  <path d="M389.6 482.2 L396 482.2 M393.2 482.2 L393.2 487.8 L396 487.8" stroke-width="0.8"/>
  <path d="M417.2 481.6 L421.4 483.4 L421.4 487.8 L417.2 489.8 L413.2 487.8 L413.2 483.4 Z M413.2 483.4 L417.2 485.4 L421.4 483.4 M417.2 485.4 L417.2 489.8" stroke-width="0.9"/>
  <path d="M434 485.4 Q438.6 478.4 443.2 485.4 Z M434 486 L434 488.4 L443.2 488.4 L443.2 486 M438.6 481.6 L438.6 488.4" stroke-width="0.9"/><path d="M434.4 485.2 Q438.6 479.4 442.8 485.2 Z" fill="#b8b8b8" stroke="none"/>
  <rect x="491.6" y="481" width="9.6" height="9.6" rx="1"/>
  <path d="M493.4 483 Q496.6 483 497 486 Q497.4 488.6 499.6 488.8"/>
  <path d="M493.6 479.6 L493.6 481 M496.4 479.6 L496.4 481 M499.2 479.6 L499.2 481"/>
 </g>
 <g fill="#b8b8b8">
  <rect x="387.4" y="481" width="2.4" height="2.4"/><rect x="395.6" y="481" width="2.4" height="2.4"/><rect x="395.6" y="486.6" width="2.4" height="2.4"/>
  <path d="M412 478.6 l0.8 1.8 l1.8 0.6 l-1.8 0.6 l-0.8 1.8 l-0.8 -1.8 l-1.8 -0.6 l1.8 -0.6 z"/>
  <rect x="453.6" y="480.6" width="7.4" height="7.4"/>
  <rect x="450.6" y="483.4" width="7.2" height="7.2" stroke="#232323" stroke-width="0.8"/>
  <ellipse cx="475.6" cy="484.6" rx="4" ry="2.8" transform="rotate(-35 475.6 484.6)"/>
  <ellipse cx="472.4" cy="486.8" rx="4" ry="2.8" transform="rotate(-35 472.4 486.8)" stroke="#232323" stroke-width="0.7"/>
 </g>
 <!-- playhead -->
 <rect x="517.9" y="488" width="1.4" height="76" fill="#2778cc"/>
 <path d="M514.7 486.3 L522.4 486.3 L522.4 490.2 L518.6 495.8 L514.7 490.2 Z" fill="#2d8ceb"/>
 <!-- red arrow annotation -->
 <path d="M411.4 484.3 L276.4 505.2 L273.7 502.7 L263.4 509.5 L274.9 513.6 L275.4 510.5 L300 506.6 L350.7 497.6 L376 492.4 L411.4 485.3 Z" fill="#ee3338"/>
</svg>

</body>
</html>
